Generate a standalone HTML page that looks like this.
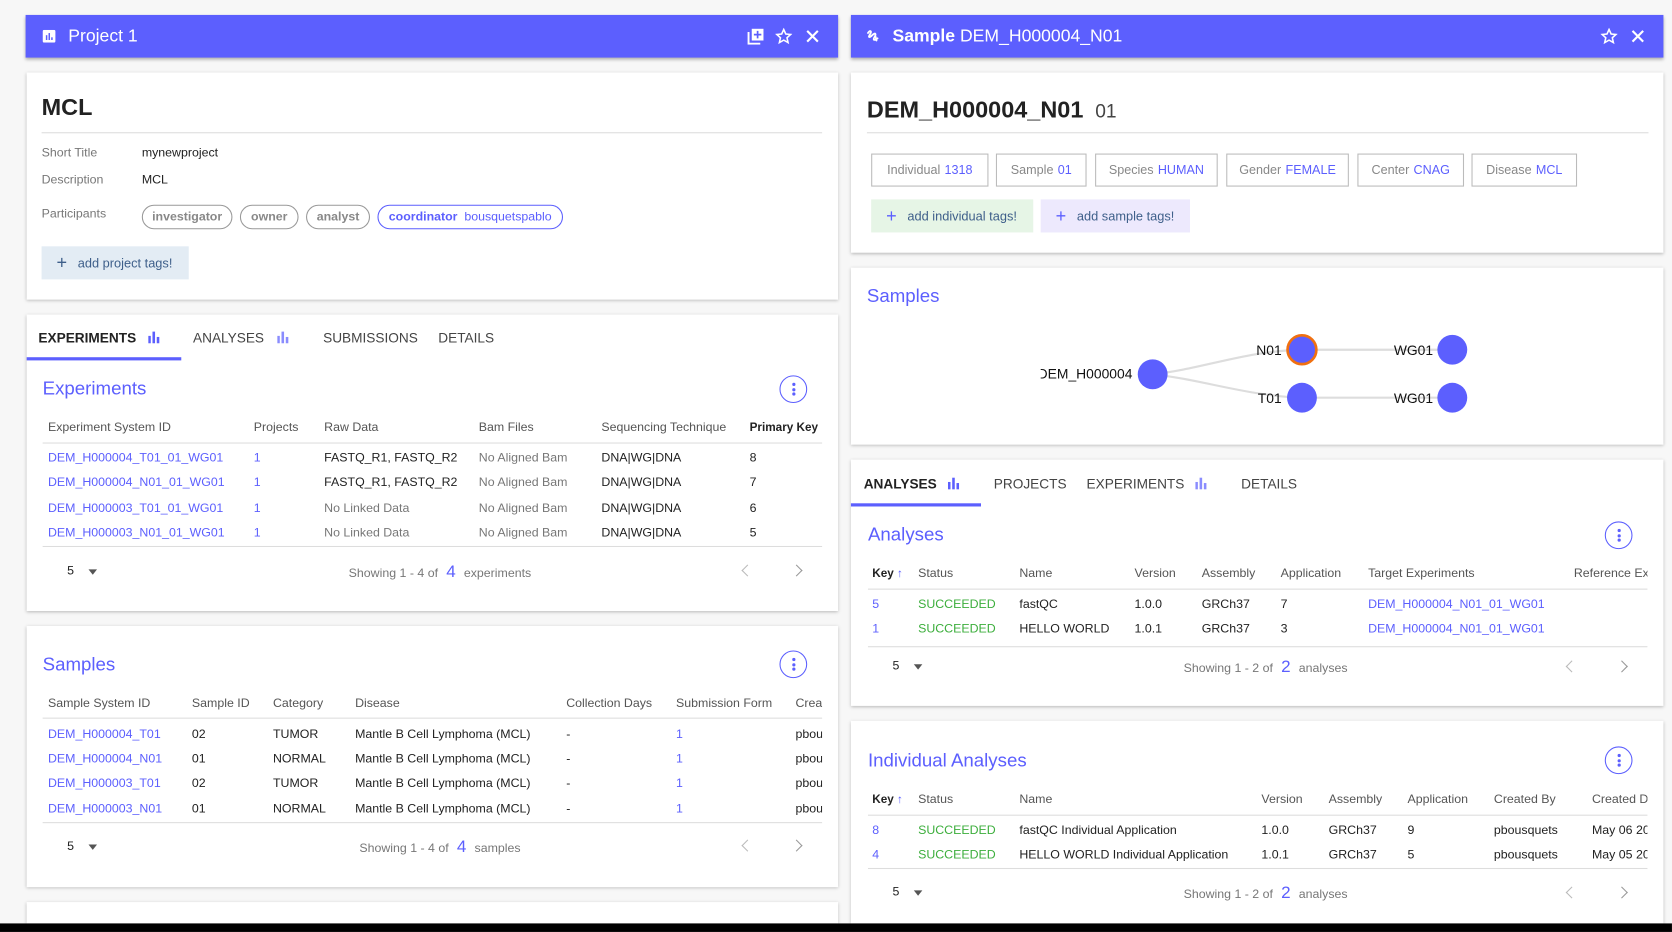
<!DOCTYPE html>
<html><head><meta charset="utf-8">
<style>
*{box-sizing:border-box;margin:0;padding:0}
html,body{width:1672px;height:932px;overflow:hidden;background:#f7f7f7}
#w{position:absolute;left:0;top:0;width:1568px;height:874px;overflow:hidden;transform:scale(1.0663);transform-origin:0 0;font-family:"Liberation Sans",Arial,sans-serif;color:#222}
.a{position:absolute;white-space:nowrap}
.hdr{position:absolute;background:#5c5ffe;box-shadow:0 2px 3px rgba(0,0,0,.3);color:#fff}
.card{position:absolute;background:#fff;box-shadow:0 1px 3px rgba(0,0,0,.25)}
.t{position:absolute;white-space:nowrap;font-size:11.6px;line-height:14px}
.h{color:#555}
.l{color:#5c5ffe}
.g{color:#777}
.ok{color:#3cae3c}
.line{position:absolute;height:1px;background:#ddd}
.keb{position:absolute;width:26px;height:26px;border:1.5px solid #5c5ffe;border-radius:50%}
.keb i{position:absolute;left:10.5px;width:3px;height:3px;border-radius:50%;background:#5c5ffe}
.title{position:absolute;font-size:17.5px;color:#5c5ffe;white-space:nowrap}
.tab{position:absolute;font-size:12.8px;color:#444;white-space:nowrap;line-height:14px}
.chip{position:absolute;height:23px;border:1px solid #999;border-radius:12px;font-size:11.6px;font-weight:bold;color:#888;line-height:21px;text-align:center}
.tag{position:absolute;height:31px;border:1px solid #bbb;font-size:11.8px;color:#888;line-height:29px;text-align:center}
.tag b{font-weight:normal;color:#5c5ffe;margin-left:4px}
.chev{position:absolute;width:8px;height:8px;border-left:1.5px solid #bbb;border-bottom:1.5px solid #bbb}
</style></head><body><div id="w">

<div class="hdr" style="left:24px;top:14px;width:762px;height:40px">
<svg class="a" style="left:16px;top:14px" width="12" height="12" viewBox="0 0 12 12"><rect width="12" height="12" rx="1.5" fill="#fff"/><rect x="3" y="5" width="1.4" height="4.5" fill="#5c5ffe"/><rect x="5.5" y="3" width="1.4" height="6.5" fill="#5c5ffe"/><rect x="8" y="7" width="1.4" height="2.5" fill="#5c5ffe"/></svg>
<div class="a" style="left:40px;top:11px;font-size:16.5px">Project 1</div>
<svg class="a" style="left:677px;top:12px" width="16" height="16" viewBox="0 0 16 16"><rect x="4" y="1" width="11" height="11" fill="#fff"/><path d="M1 4v11h11" stroke="#fff" stroke-width="1.8" fill="none"/><path d="M9.5 3v7M6 6.5h7" stroke="#5c5ffe" stroke-width="1.6"/></svg>
<svg class="a" style="left:703px;top:12px" width="16" height="16" viewBox="0 0 24 24"><path d="M12 2.5l2.9 6.3 6.8.7-5.1 4.6 1.5 6.8L12 17.4l-6.1 3.5 1.5-6.8-5.1-4.6 6.8-.7z" fill="none" stroke="#fff" stroke-width="2.2"/></svg>
<svg class="a" style="left:731px;top:13px" width="14" height="14" viewBox="0 0 14 14"><path d="M2 2l10 10M12 2L2 12" stroke="#fff" stroke-width="2"/></svg>
</div>

<div class="card" style="left:25px;top:68px;width:761px;height:213px">
<div class="a" style="left:14px;top:20px;font-size:22px;font-weight:bold;color:#222">MCL</div>
<div class="line" style="left:14px;top:56px;width:732px"></div>
<div class="t g" style="left:14px;top:69px">Short Title</div><div class="t" style="left:108px;top:69px">mynewproject</div>
<div class="t g" style="left:14px;top:94px">Description</div><div class="t" style="left:108px;top:94px">MCL</div>
<div class="t g" style="left:14px;top:126px">Participants</div>
<div class="chip" style="left:108px;top:124px;width:85px">investigator</div>
<div class="chip" style="left:200px;top:124px;width:55px">owner</div>
<div class="chip" style="left:262px;top:124px;width:60px">analyst</div>
<div class="chip" style="left:329px;top:124px;width:174px;border-color:#5c5ffe;color:#5c5ffe">coordinator <span style="font-weight:normal">&nbsp;bousquetspablo</span></div>
<div class="a" style="left:14px;top:163px;width:138px;height:31px;background:#e3ecf4;color:#3e5f8a;font-size:12px;line-height:31px;padding-left:14px"><span style="font-size:17px;vertical-align:-1px">+</span>&nbsp;&nbsp; add project tags!</div>
</div>

<div class="card" style="left:25px;top:295px;width:761px;height:278px">
<div class="tab" style="left:11px;top:15px;color:#222;font-weight:bold">EXPERIMENTS</div>
<svg class="a" style="left:114px;top:15px" width="12" height="12"><rect x="0" y="5" width="2.4" height="7" fill="#5c5ffe"/><rect x="4" y="1" width="2.4" height="11" fill="#5c5ffe"/><rect x="8" y="6" width="2.4" height="6" fill="#5c5ffe"/></svg>
<div class="tab" style="left:156px;top:15px">ANALYSES</div>
<svg class="a" style="left:235px;top:15px" width="12" height="12"><rect x="0" y="5" width="2.4" height="7" fill="#8a8cfe"/><rect x="4" y="1" width="2.4" height="11" fill="#8a8cfe"/><rect x="8" y="6" width="2.4" height="6" fill="#8a8cfe"/></svg>
<div class="tab" style="left:278px;top:15px">SUBMISSIONS</div>
<div class="tab" style="left:386px;top:15px">DETAILS</div>
<div class="a" style="left:0;top:40px;width:145px;height:3px;background:#5c5ffe"></div>
<div class="title" style="left:15px;top:59px">Experiments</div>
<div class="keb" style="left:706px;top:57px"><i style="top:6px"></i><i style="top:10.5px"></i><i style="top:15px"></i></div>
<div class="t h" style="left:20px;top:99px">Experiment System ID</div>
<div class="t h" style="left:213px;top:99px">Projects</div>
<div class="t h" style="left:279px;top:99px">Raw Data</div>
<div class="t h" style="left:424px;top:99px">Bam Files</div>
<div class="t h" style="left:539px;top:99px">Sequencing Technique</div>
<div class="t" style="left:678px;top:99px;font-weight:bold;color:#222;font-size:11px;width:68px;overflow:hidden">Primary Key <span class="l">↑</span></div>
<div class="line" style="left:15px;top:120px;width:731px"></div>
<div class="t l" style="left:20px;top:128px">DEM_H000004_T01_01_WG01</div><div class="t l" style="left:213px;top:128px">1</div><div class="t" style="left:279px;top:128px">FASTQ_R1, FASTQ_R2</div><div class="t g" style="left:424px;top:128px">No Aligned Bam</div><div class="t" style="left:539px;top:128px">DNA|WG|DNA</div><div class="t" style="left:678px;top:128px">8</div>
<div class="t l" style="left:20px;top:151px">DEM_H000004_N01_01_WG01</div><div class="t l" style="left:213px;top:151px">1</div><div class="t" style="left:279px;top:151px">FASTQ_R1, FASTQ_R2</div><div class="t g" style="left:424px;top:151px">No Aligned Bam</div><div class="t" style="left:539px;top:151px">DNA|WG|DNA</div><div class="t" style="left:678px;top:151px">7</div>
<div class="t l" style="left:20px;top:175px">DEM_H000003_T01_01_WG01</div><div class="t l" style="left:213px;top:175px">1</div><div class="t g" style="left:279px;top:175px">No Linked Data</div><div class="t g" style="left:424px;top:175px">No Aligned Bam</div><div class="t" style="left:539px;top:175px">DNA|WG|DNA</div><div class="t" style="left:678px;top:175px">6</div>
<div class="t l" style="left:20px;top:198px">DEM_H000003_N01_01_WG01</div><div class="t l" style="left:213px;top:198px">1</div><div class="t g" style="left:279px;top:198px">No Linked Data</div><div class="t g" style="left:424px;top:198px">No Aligned Bam</div><div class="t" style="left:539px;top:198px">DNA|WG|DNA</div><div class="t" style="left:678px;top:198px">5</div>
<div class="line" style="left:15px;top:217px;width:731px"></div>
<div class="t" style="left:38px;top:234px">5</div><div class="a" style="left:58px;top:239px;border:4.5px solid transparent;border-top:5px solid #555"></div>
<div class="t g" style="left:302px;top:235px">Showing 1 - 4 of <span class="l" style="font-size:16px">&nbsp;4&nbsp;</span> experiments</div>
<div class="chev" style="left:672px;top:236px;transform:rotate(45deg)"></div><div class="chev" style="left:718px;top:236px;transform:rotate(-135deg);border-color:#999"></div>
</div>

<div class="card" style="left:25px;top:587px;width:761px;height:245px">
<div class="title" style="left:15px;top:26px">Samples</div>
<div class="keb" style="left:706px;top:23px"><i style="top:6px"></i><i style="top:10.5px"></i><i style="top:15px"></i></div>
<div class="t h" style="left:20px;top:66px">Sample System ID</div>
<div class="t h" style="left:155px;top:66px">Sample ID</div>
<div class="t h" style="left:231px;top:66px">Category</div>
<div class="t h" style="left:308px;top:66px">Disease</div>
<div class="t h" style="left:506px;top:66px">Collection Days</div>
<div class="t h" style="left:609px;top:66px">Submission Form</div>
<div class="t h" style="left:721px;top:66px;width:25px;overflow:hidden">Created</div>
<div class="line" style="left:15px;top:86px;width:731px"></div>
<div class="t l" style="left:20px;top:95px">DEM_H000004_T01</div><div class="t" style="left:155px;top:95px">02</div><div class="t" style="left:231px;top:95px">TUMOR</div><div class="t" style="left:308px;top:95px">Mantle B Cell Lymphoma (MCL)</div><div class="t" style="left:506px;top:95px">-</div><div class="t l" style="left:609px;top:95px">1</div><div class="t" style="left:721px;top:95px;width:25px;overflow:hidden">pbousquets</div>
<div class="t l" style="left:20px;top:118px">DEM_H000004_N01</div><div class="t" style="left:155px;top:118px">01</div><div class="t" style="left:231px;top:118px">NORMAL</div><div class="t" style="left:308px;top:118px">Mantle B Cell Lymphoma (MCL)</div><div class="t" style="left:506px;top:118px">-</div><div class="t l" style="left:609px;top:118px">1</div><div class="t" style="left:721px;top:118px;width:25px;overflow:hidden">pbousquets</div>
<div class="t l" style="left:20px;top:141px">DEM_H000003_T01</div><div class="t" style="left:155px;top:141px">02</div><div class="t" style="left:231px;top:141px">TUMOR</div><div class="t" style="left:308px;top:141px">Mantle B Cell Lymphoma (MCL)</div><div class="t" style="left:506px;top:141px">-</div><div class="t l" style="left:609px;top:141px">1</div><div class="t" style="left:721px;top:141px;width:25px;overflow:hidden">pbousquets</div>
<div class="t l" style="left:20px;top:165px">DEM_H000003_N01</div><div class="t" style="left:155px;top:165px">01</div><div class="t" style="left:231px;top:165px">NORMAL</div><div class="t" style="left:308px;top:165px">Mantle B Cell Lymphoma (MCL)</div><div class="t" style="left:506px;top:165px">-</div><div class="t l" style="left:609px;top:165px">1</div><div class="t" style="left:721px;top:165px;width:25px;overflow:hidden">pbousquets</div>
<div class="line" style="left:15px;top:184px;width:731px"></div>
<div class="t" style="left:38px;top:200px">5</div><div class="a" style="left:58px;top:205px;border:4.5px solid transparent;border-top:5px solid #555"></div>
<div class="t g" style="left:312px;top:201px">Showing 1 - 4 of <span class="l" style="font-size:16px">&nbsp;4&nbsp;</span> samples</div>
<div class="chev" style="left:672px;top:202px;transform:rotate(45deg)"></div><div class="chev" style="left:718px;top:202px;transform:rotate(-135deg);border-color:#999"></div>
</div>
<div class="card" style="left:25px;top:846px;width:761px;height:20px"></div>

<div class="hdr" style="left:798px;top:14px;width:762px;height:40px">
<svg class="a" style="left:14px;top:12px" width="16" height="16" viewBox="0 0 16 16"><path d="M2 5c2-3 4-2 2 1s-1 4 2 1 4-1 2 2 1 3 3 1M9 8l1 4" stroke="#fff" stroke-width="1.7" fill="none" stroke-linecap="round"/></svg>
<div class="a" style="left:39px;top:11px;font-size:16.5px"><b>Sample</b> DEM_H000004_N01</div>
<svg class="a" style="left:703px;top:12px" width="16" height="16" viewBox="0 0 24 24"><path d="M12 2.5l2.9 6.3 6.8.7-5.1 4.6 1.5 6.8L12 17.4l-6.1 3.5 1.5-6.8-5.1-4.6 6.8-.7z" fill="none" stroke="#fff" stroke-width="2.2"/></svg>
<svg class="a" style="left:731px;top:13px" width="14" height="14" viewBox="0 0 14 14"><path d="M2 2l10 10M12 2L2 12" stroke="#fff" stroke-width="2"/></svg>
</div>

<div class="card" style="left:798px;top:68px;width:762px;height:169px">
<div class="a" style="left:15px;top:22px;font-size:22px;font-weight:bold;color:#222">DEM_H000004_N01 <span style="font-weight:normal;font-size:18px;color:#444">&nbsp;01</span></div>
<div class="line" style="left:15px;top:56px;width:733px"></div>
<div class="tag" style="left:19px;top:76px;width:110px">Individual<b>1318</b></div>
<div class="tag" style="left:136px;top:76px;width:85px">Sample<b>01</b></div>
<div class="tag" style="left:229px;top:76px;width:115px">Species<b>HUMAN</b></div>
<div class="tag" style="left:352px;top:76px;width:115px">Gender<b>FEMALE</b></div>
<div class="tag" style="left:475px;top:76px;width:100px">Center<b>CNAG</b></div>
<div class="tag" style="left:582px;top:76px;width:99px">Disease<b>MCL</b></div>
<div class="a" style="left:19px;top:119px;width:152px;height:31px;background:#e6f5e6;color:#3e5f8a;font-size:12px;line-height:31px;padding-left:14px"><span style="font-size:17px;color:#5c5ffe;vertical-align:-1px">+</span>&nbsp;&nbsp; add individual tags!</div>
<div class="a" style="left:178px;top:119px;width:140px;height:31px;background:#ede9fd;color:#3e5f8a;font-size:12px;line-height:31px;padding-left:14px"><span style="font-size:17px;color:#5c5ffe;vertical-align:-1px">+</span>&nbsp;&nbsp; add sample tags!</div>
</div>

<div class="card" style="left:798px;top:251px;width:762px;height:166px">
<div class="title" style="left:15px;top:16px">Samples</div>
<svg class="a" style="left:0;top:0" width="762" height="166" font-family="Liberation Sans, Arial, sans-serif" font-size="13">
<path d="M283 100 C330 95 370 78 423 77" stroke="#ddd" stroke-width="2" fill="none"/>
<path d="M283 100 C330 105 370 120 423 122" stroke="#ddd" stroke-width="2" fill="none"/>
<path d="M423 77 H564 M423 122 H564" stroke="#ddd" stroke-width="2"/>
<circle cx="283" cy="100" r="14" fill="#5c5ffe"/>
<circle cx="423" cy="77" r="13.5" fill="#5c5ffe" stroke="#f07010" stroke-width="2.5"/>
<circle cx="423" cy="122" r="14" fill="#5c5ffe"/>
<circle cx="564" cy="77" r="14" fill="#5c5ffe"/>
<circle cx="564" cy="122" r="14" fill="#5c5ffe"/>
<text x="264" y="104" text-anchor="end" fill="#111">DEM_H000004</text>
<rect x="170" y="88" width="8" height="20" fill="#fff"/>
<text x="404" y="82" text-anchor="end" fill="#111">N01</text>
<text x="404" y="127" text-anchor="end" fill="#111">T01</text>
<text x="546" y="82" text-anchor="end" fill="#111">WG01</text>
<text x="546" y="127" text-anchor="end" fill="#111">WG01</text>
</svg>
</div>

<div class="card" style="left:798px;top:431px;width:762px;height:231px">
<div class="tab" style="left:12px;top:16px;color:#222;font-weight:bold">ANALYSES</div>
<svg class="a" style="left:91px;top:16px" width="12" height="12"><rect x="0" y="5" width="2.4" height="7" fill="#5c5ffe"/><rect x="4" y="1" width="2.4" height="11" fill="#5c5ffe"/><rect x="8" y="6" width="2.4" height="6" fill="#5c5ffe"/></svg>
<div class="tab" style="left:134px;top:16px">PROJECTS</div>
<div class="tab" style="left:221px;top:16px">EXPERIMENTS</div>
<svg class="a" style="left:323px;top:16px" width="12" height="12"><rect x="0" y="5" width="2.4" height="7" fill="#8a8cfe"/><rect x="4" y="1" width="2.4" height="11" fill="#8a8cfe"/><rect x="8" y="6" width="2.4" height="6" fill="#8a8cfe"/></svg>
<div class="tab" style="left:366px;top:16px">DETAILS</div>
<div class="a" style="left:0;top:41px;width:122px;height:3px;background:#5c5ffe"></div>
<div class="title" style="left:16px;top:60px">Analyses</div>
<div class="keb" style="left:707px;top:58px"><i style="top:6px"></i><i style="top:10.5px"></i><i style="top:15px"></i></div>
<div class="t" style="left:20px;top:100px;font-weight:bold;font-size:11px">Key <span class="l">↑</span></div>
<div class="t h" style="left:63px;top:100px">Status</div><div class="t h" style="left:158px;top:100px">Name</div><div class="t h" style="left:266px;top:100px">Version</div><div class="t h" style="left:329px;top:100px">Assembly</div><div class="t h" style="left:403px;top:100px">Application</div><div class="t h" style="left:485px;top:100px">Target Experiments</div><div class="t h" style="left:678px;top:100px;width:69px;overflow:hidden">Reference Experiments</div>
<div class="line" style="left:16px;top:121px;width:731px"></div>
<div class="t l" style="left:20px;top:129px">5</div><div class="t ok" style="left:63px;top:129px">SUCCEEDED</div><div class="t" style="left:158px;top:129px">fastQC</div><div class="t" style="left:266px;top:129px">1.0.0</div><div class="t" style="left:329px;top:129px">GRCh37</div><div class="t" style="left:403px;top:129px">7</div><div class="t l" style="left:485px;top:129px">DEM_H000004_N01_01_WG01</div>
<div class="t l" style="left:20px;top:152px">1</div><div class="t ok" style="left:63px;top:152px">SUCCEEDED</div><div class="t" style="left:158px;top:152px">HELLO WORLD</div><div class="t" style="left:266px;top:152px">1.0.1</div><div class="t" style="left:329px;top:152px">GRCh37</div><div class="t" style="left:403px;top:152px">3</div><div class="t l" style="left:485px;top:152px">DEM_H000004_N01_01_WG01</div>
<div class="line" style="left:16px;top:175px;width:731px"></div>
<div class="t" style="left:39px;top:187px">5</div><div class="a" style="left:59px;top:192px;border:4.5px solid transparent;border-top:5px solid #555"></div>
<div class="t g" style="left:312px;top:188px">Showing 1 - 2 of <span class="l" style="font-size:16px">&nbsp;2&nbsp;</span> analyses</div>
<div class="chev" style="left:672px;top:190px;transform:rotate(45deg)"></div><div class="chev" style="left:719px;top:190px;transform:rotate(-135deg);border-color:#999"></div>
</div>

<div class="card" style="left:798px;top:676px;width:762px;height:190px">
<div class="title" style="left:16px;top:27px">Individual Analyses</div>
<div class="keb" style="left:707px;top:24px"><i style="top:6px"></i><i style="top:10.5px"></i><i style="top:15px"></i></div>
<div class="t" style="left:20px;top:67px;font-weight:bold;font-size:11px">Key <span class="l">↑</span></div>
<div class="t h" style="left:63px;top:67px">Status</div><div class="t h" style="left:158px;top:67px">Name</div><div class="t h" style="left:385px;top:67px">Version</div><div class="t h" style="left:448px;top:67px">Assembly</div><div class="t h" style="left:522px;top:67px">Application</div><div class="t h" style="left:603px;top:67px">Created By</div><div class="t h" style="left:695px;top:67px;width:52px;overflow:hidden">Created Date</div>
<div class="line" style="left:16px;top:88px;width:731px"></div>
<div class="t l" style="left:20px;top:96px">8</div><div class="t ok" style="left:63px;top:96px">SUCCEEDED</div><div class="t" style="left:158px;top:96px">fastQC Individual Application</div><div class="t" style="left:385px;top:96px">1.0.0</div><div class="t" style="left:448px;top:96px">GRCh37</div><div class="t" style="left:522px;top:96px">9</div><div class="t" style="left:603px;top:96px">pbousquets</div><div class="t" style="left:695px;top:96px;width:52px;overflow:hidden">May 06 2022</div>
<div class="t l" style="left:20px;top:119px">4</div><div class="t ok" style="left:63px;top:119px">SUCCEEDED</div><div class="t" style="left:158px;top:119px">HELLO WORLD Individual Application</div><div class="t" style="left:385px;top:119px">1.0.1</div><div class="t" style="left:448px;top:119px">GRCh37</div><div class="t" style="left:522px;top:119px">5</div><div class="t" style="left:603px;top:119px">pbousquets</div><div class="t" style="left:695px;top:119px;width:52px;overflow:hidden">May 05 2022</div>
<div class="line" style="left:16px;top:138px;width:731px"></div>
<div class="t" style="left:39px;top:154px">5</div><div class="a" style="left:59px;top:159px;border:4.5px solid transparent;border-top:5px solid #555"></div>
<div class="t g" style="left:312px;top:155px">Showing 1 - 2 of <span class="l" style="font-size:16px">&nbsp;2&nbsp;</span> analyses</div>
<div class="chev" style="left:672px;top:157px;transform:rotate(45deg)"></div><div class="chev" style="left:719px;top:157px;transform:rotate(-135deg);border-color:#999"></div>
</div>

<div class="a" style="left:0;top:866px;width:1568px;height:8px;background:#000"></div>
</div></body></html>
